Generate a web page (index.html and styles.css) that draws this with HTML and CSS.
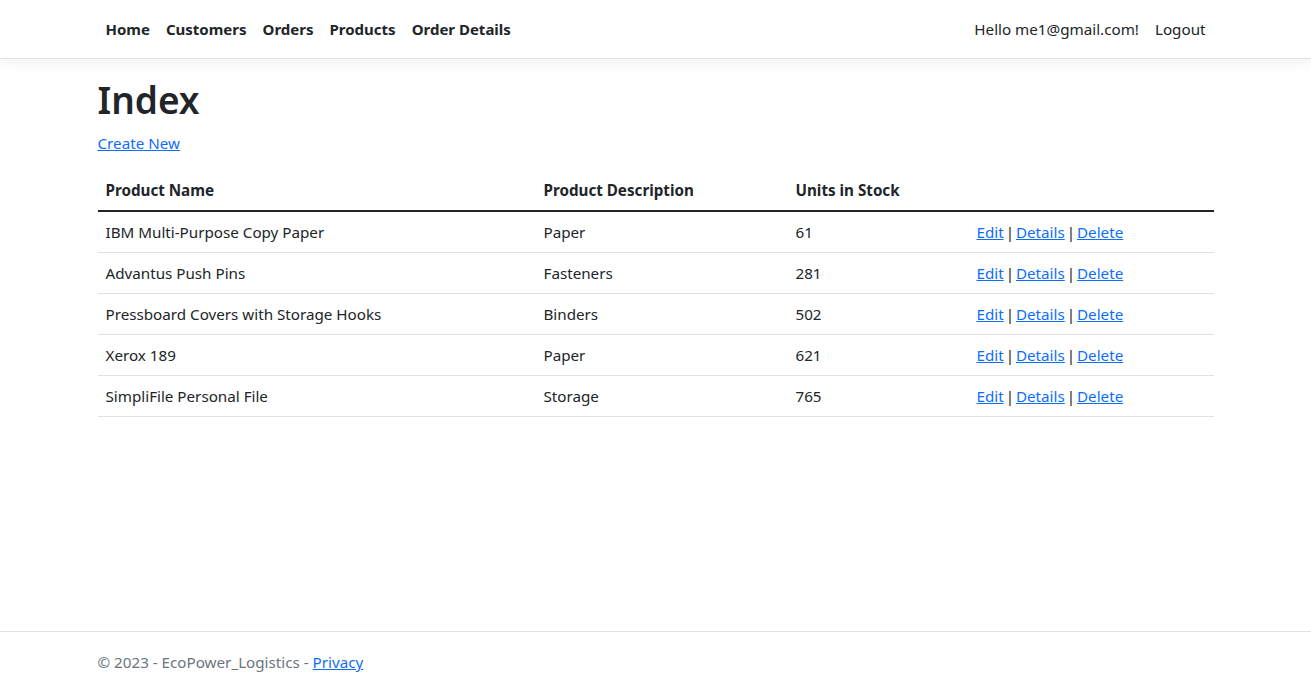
FILE: index.html
```html
<!DOCTYPE html>
<html lang="en">
<head>
<meta charset="utf-8">
<title>Index - EcoPower_Logistics</title>
<link rel="stylesheet" href="styles.css">
</head>
<body>
<div class="page">
  <header class="navbar">
    <div class="container nav-inner">
      <ul class="nav-list">
        <li><a class="nav-link bold" href="#">Home</a></li>
        <li><a class="nav-link bold" href="#">Customers</a></li>
        <li><a class="nav-link bold" href="#">Orders</a></li>
        <li><a class="nav-link bold" href="#">Products</a></li>
        <li><a class="nav-link bold" href="#">Order Details</a></li>
      </ul>
      <ul class="nav-list">
        <li><a class="nav-link" href="#">Hello me1@gmail.com!</a></li>
        <li><a class="nav-link" href="#">Logout</a></li>
      </ul>
    </div>
  </header>
  <main class="container main">
    <h1 class="title">Index</h1>
    <p class="create"><a href="#" class="link">Create New</a></p>
    <table class="table">
      <thead>
        <tr>
          <th class="c1">Product Name</th>
          <th class="c2">Product Description</th>
          <th class="c3">Units in Stock</th>
          <th class="c4"></th>
        </tr>
      </thead>
      <tbody>
        <tr><td>IBM Multi-Purpose Copy Paper</td><td>Paper</td><td>61</td><td class="actions"><a href="#" class="link">Edit</a> | <a href="#" class="link">Details</a> | <a href="#" class="link">Delete</a></td></tr>
        <tr><td>Advantus Push Pins</td><td>Fasteners</td><td>281</td><td class="actions"><a href="#" class="link">Edit</a> | <a href="#" class="link">Details</a> | <a href="#" class="link">Delete</a></td></tr>
        <tr><td>Pressboard Covers with Storage Hooks</td><td>Binders</td><td>502</td><td class="actions"><a href="#" class="link">Edit</a> | <a href="#" class="link">Details</a> | <a href="#" class="link">Delete</a></td></tr>
        <tr><td>Xerox 189</td><td>Paper</td><td>621</td><td class="actions"><a href="#" class="link">Edit</a> | <a href="#" class="link">Details</a> | <a href="#" class="link">Delete</a></td></tr>
        <tr><td>SimpliFile Personal File</td><td>Storage</td><td>765</td><td class="actions"><a href="#" class="link">Edit</a> | <a href="#" class="link">Details</a> | <a href="#" class="link">Delete</a></td></tr>
      </tbody>
    </table>
  </main>
  <footer class="footer">
    <div class="container">&copy; 2023 - EcoPower_Logistics - <a href="#" class="link">Privacy</a></div>
  </footer>
</div>
</body>
</html>
```

FILE: styles.css
```css
* { box-sizing: border-box; }
html, body { margin: 0; padding: 0; }
body {
  font-family: "Noto Sans", "Open Sans", sans-serif;
  font-size: 15.2px;
  line-height: 24px;
  color: #212529;
  background: #fff;
}
.page {
  min-height: 100vh;
  display: flex;
  flex-direction: column;
}
.container {
  width: 100%;
  max-width: 1140px;
  margin: 0 auto;
  padding: 0 12px;
}
.navbar {
  border-bottom: 1px solid #dee2e6;
  box-shadow: 0 4px 12px rgba(0,0,0,0.05);
  padding: 9px 0 9px;
  margin-bottom: 16px;
}
.nav-inner {
  display: flex;
  justify-content: space-between;
  align-items: center;
}
.nav-list {
  list-style: none;
  margin: 0;
  padding: 0;
  display: flex;
}
.nav-link {
  display: block;
  padding: 8px;
  color: #212529;
  text-decoration: none;
}
.nav-link.bold { font-weight: 700; font-size: 15px; }
.main { flex: 1; }
.title {
  font-size: 37px;
  line-height: 50px;
  font-weight: 600;
  margin: 0 0 6px;
}
.create { margin: 0 0 15px; }
.link { color: #0d6efd; text-decoration: underline; }
.table {
  width: 100%;
  border-collapse: collapse;
  margin-bottom: 16px;
}
.table th, .table td {
  text-align: left;
  padding: 8px;
  border-bottom: 1px solid #dee2e6;
  vertical-align: top;
}
.table th { font-weight: 700; }
.table thead th { border-bottom: 2px solid #212529; }
.actions { word-spacing: -2px; }
.c1 { width: 438px; }
.c2 { width: 252px; }
.c3 { width: 181px; }
.footer {
  border-top: 1px solid #dee2e6;
  line-height: 60px;
  color: #6c757d;
  white-space: nowrap;
}
```
